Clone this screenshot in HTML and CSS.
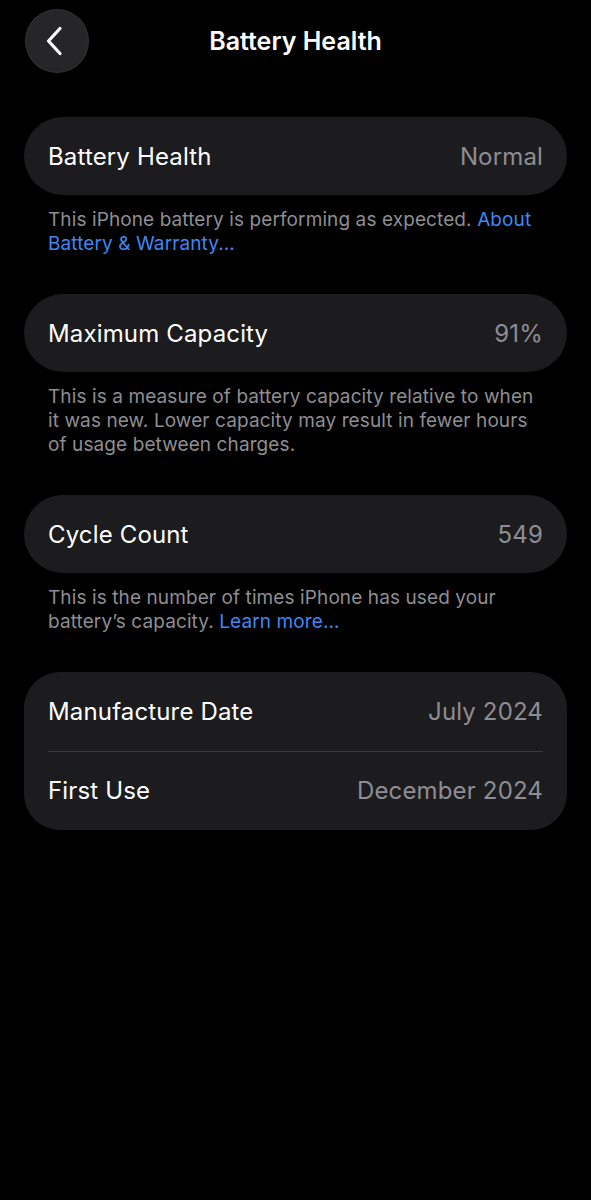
FILE: index.html
```html
<!DOCTYPE html>
<html>
<head>
<meta charset="utf-8">
<link rel="stylesheet" href="styles.css">
</head>
<body>
<div class="screen">
  <header class="nav">
    <button class="back" aria-label="Back">
      <svg width="22" height="30" viewBox="0 0 22 30"><path d="M16 2.5 L4.5 15 L16 27.5" fill="none" stroke="#fff" stroke-width="3.2" stroke-linecap="round" stroke-linejoin="round"/></svg>
    </button>
    <h1 class="title">Battery Health</h1>
  </header>

  <section class="group">
    <div class="card">
      <div class="row"><span class="label">Battery Health</span><span class="value">Normal</span></div>
    </div>
    <p class="footer">This iPhone battery is performing as expected. <a class="link">About Battery &amp; Warranty...</a></p>
  </section>

  <section class="group">
    <div class="card">
      <div class="row"><span class="label">Maximum Capacity</span><span class="value">91%</span></div>
    </div>
    <p class="footer">This is a measure of battery capacity relative to when it was new. Lower capacity may result in fewer hours of usage between charges.</p>
  </section>

  <section class="group">
    <div class="card">
      <div class="row"><span class="label">Cycle Count</span><span class="value">549</span></div>
    </div>
    <p class="footer">This is the number of times iPhone has used your battery’s capacity. <a class="link">Learn more...</a></p>
  </section>

  <section class="group">
    <div class="card card-multi">
      <div class="row"><span class="label">Manufacture Date</span><span class="value">July 2024</span></div>
      <div class="divider"></div>
      <div class="row"><span class="label">First Use</span><span class="value">December 2024</span></div>
    </div>
  </section>
</div>
</body>
</html>
```

FILE: styles.css
```css
* { box-sizing: border-box; }
html, body {
  margin: 0;
  padding: 0;
  background: #000;
  height: 100%;
}
body {
  font-family: Inter, "Liberation Sans", sans-serif;
  color: #fff;
}
.screen {
  padding: 9px 24px 0 24px;
  display: flex;
  flex-direction: column;
}
.nav {
  position: relative;
  height: 64px;
  display: flex;
  align-items: center;
  justify-content: center;
  margin-bottom: 44px;
}
.back {
  position: absolute;
  left: 1px;
  top: 0;
  width: 64px;
  height: 64px;
  border-radius: 50%;
  border: none;
  background: #262628;
  box-shadow: inset 0 0 0 1px rgba(255,255,255,0.06);
  display: flex;
  align-items: center;
  justify-content: center;
  padding: 0 4px 0 0;
}
.title {
  margin: 0;
  font-size: 25px;
  font-weight: 600;
  letter-spacing: 0;
}
.group {
  margin-bottom: 38px;
}
.card {
  background: #1c1c1e;
  border-radius: 39px;
  padding: 0 24px;
}
.card-multi {
  border-radius: 36px;
}
.row {
  height: 78px;
  display: flex;
  align-items: center;
  justify-content: space-between;
}
.card-multi .row {
  height: 78.5px;
}
.label {
  font-size: 24px;
  letter-spacing: 0.15px;
  color: #fff;
}
.value {
  font-size: 24px;
  letter-spacing: 0.15px;
  color: #8d8d93;
}
.divider {
  height: 1px;
  background: #3a3a3c;
}
.footer {
  margin: 13px 0 0 0;
  padding: 0 24px;
  font-size: 19px;
  line-height: 24px;
  color: #8e8e93;
  letter-spacing: 0.1px;
}
.link {
  color: #3f87f5;
}
```
